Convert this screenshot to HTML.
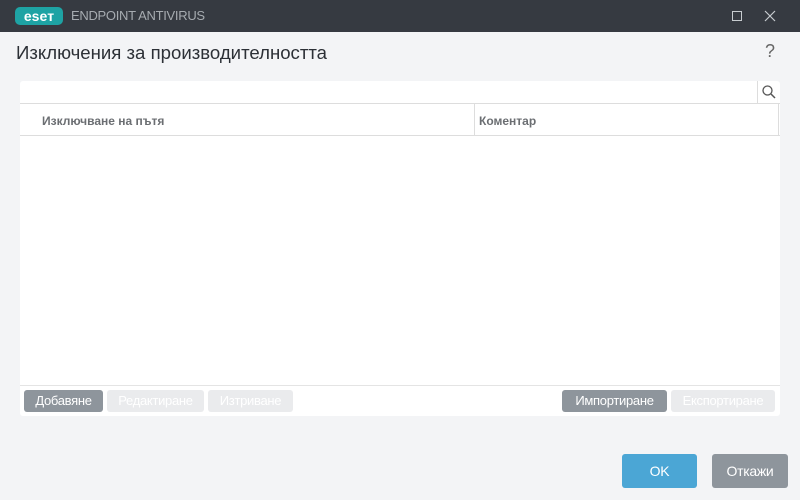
<!DOCTYPE html>
<html><head><meta charset="utf-8"><style>
*{margin:0;padding:0;box-sizing:border-box}
body{width:800px;height:500px;background:#f3f4f6;font-family:"Liberation Sans","DejaVu Sans",sans-serif;position:relative;overflow:hidden}
.tb{position:absolute;left:0;top:0;width:800px;height:32px;background:#363a41}
.abs{position:absolute}
.btn{position:absolute;height:22px;border-radius:3px;color:#fff;font-size:13px;line-height:22px;text-align:center;letter-spacing:-0.3px}
.dk{background:#8e959c}.lt{background:#eaebed;color:#fff}
</style></head><body>
<div class="tb">
 <div class="abs" style="left:15px;top:7px;width:48px;height:18px;background:#1ea3a4;border-radius:5px;color:#fff;font-weight:bold;font-size:14px;line-height:18px;text-align:center">eseт</div>
 <div class="abs" style="left:71px;top:8px;color:#a6abb0;font-size:13px;letter-spacing:-0.3px">ENDPOINT ANTIVIRUS</div>
 <div class="abs" style="left:732px;top:11px;width:10px;height:10px;border:1px solid #c8ccd0"></div>
 <svg class="abs" style="left:764px;top:10px" width="12" height="12"><path d="M1 1L11 11M11 1L1 11" stroke="#c8ccd0" stroke-width="1.2"/></svg>
</div>
<div class="abs" style="left:16px;top:42px;font-size:18.6px;color:#2c3036">Изключения за производителността</div>
<div class="abs" style="left:765px;top:41px;font-size:18px;color:#666">?</div>
<div class="abs" style="left:20px;top:81px;width:760px;height:335px;background:#fff;border-radius:3px"></div>
<div class="abs" style="left:20px;top:103px;width:760px;height:1px;background:#ddd"></div>
<div class="abs" style="left:757px;top:81px;width:1px;height:22px;background:#ddd"></div>
<svg class="abs" style="left:761px;top:84px" width="16" height="16"><circle cx="6.5" cy="6.5" r="4.5" fill="none" stroke="#555" stroke-width="1.3"/><line x1="10" y1="10" x2="14" y2="14" stroke="#555" stroke-width="1.5"/></svg>
<div class="abs" style="left:20px;top:135px;width:760px;height:1px;background:#ddd"></div>
<div class="abs" style="left:474px;top:104px;width:1px;height:31px;background:#ddd"></div>
<div class="abs" style="left:778px;top:104px;width:1px;height:31px;background:#ddd"></div>
<div class="abs" style="left:42px;top:114px;font-size:12px;font-weight:bold;color:#6b6e72">Изключване на пътя</div>
<div class="abs" style="left:479px;top:114px;font-size:12px;font-weight:bold;color:#6b6e72">Коментар</div>
<div class="abs" style="left:20px;top:385px;width:760px;height:1px;background:#e4e4e4"></div>
<div class="btn dk" style="left:24px;top:390px;width:79px">Добавяне</div>
<div class="btn lt" style="left:107px;top:390px;width:97px">Редактиране</div>
<div class="btn lt" style="left:208px;top:390px;width:85px">Изтриване</div>
<div class="btn dk" style="left:562px;top:390px;width:105px">Импортиране</div>
<div class="btn lt" style="left:671px;top:390px;width:104px">Експортиране</div>
<div class="btn" style="left:622px;top:454px;width:75px;height:34px;line-height:34px;background:#4ba6d5;font-size:14px">OK</div>
<div class="btn" style="left:712px;top:454px;width:76px;height:34px;line-height:34px;background:#8e959c;font-size:14px">Откажи</div>
</body></html>
